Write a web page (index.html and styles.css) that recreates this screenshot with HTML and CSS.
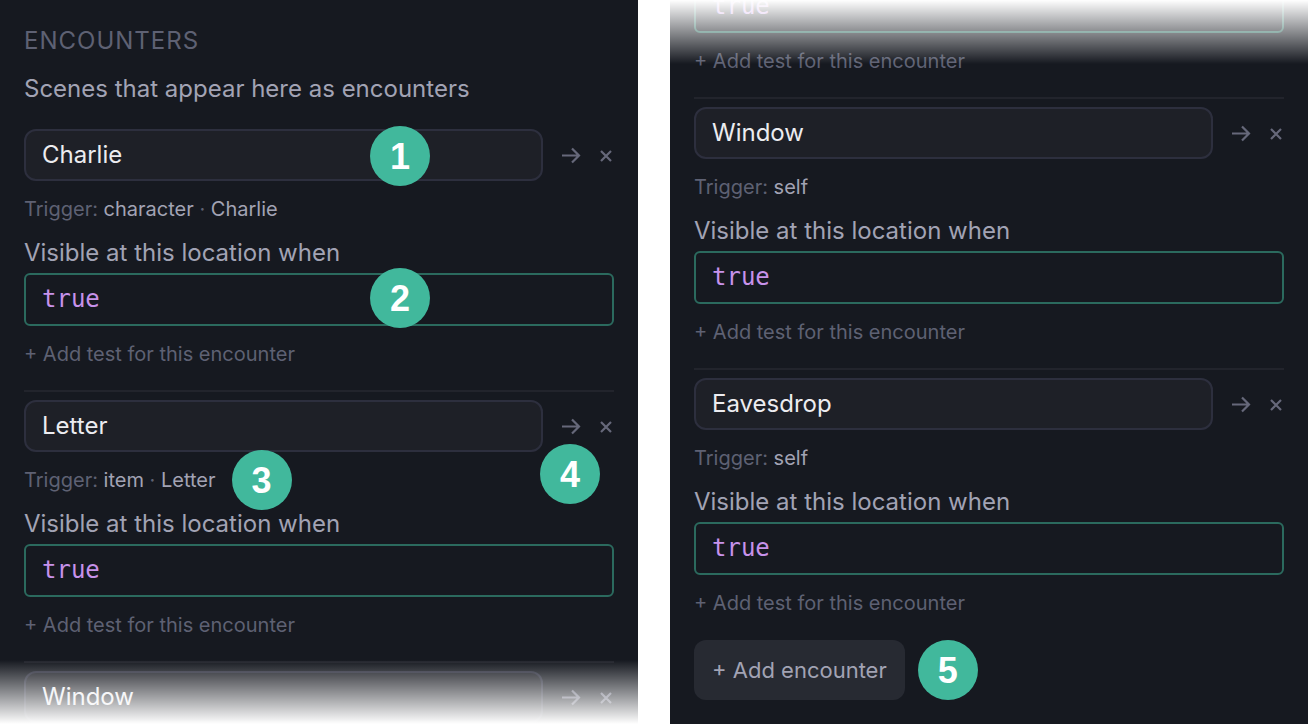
FILE: index.html
```html
<!DOCTYPE html>
<html lang="en">
<head>
<meta charset="utf-8">
<title>Encounters</title>
<link rel="stylesheet" href="styles.css">
</head>
<body>
<svg class="sprite" aria-hidden="true">
  <symbol id="arrow" viewBox="0 0 20 18"><path d="M1 9.500H18M11 2.500L18 9.500L11 16.500"/></symbol>
  <symbol id="close" viewBox="0 0 15 18"><path d="M2 5L12 15M12 5L2 15"/></symbol>
</svg>
<main class="board">
  <section class="panel panel-start">
    <h2 class="title">Encounters</h2>
    <p class="subtitle">Scenes that appear here as encounters</p>
    <article class="encounter">
      <div class="head">
        <input class="name" type="text" value="Charlie" aria-label="Scene">
        <button class="icon" type="button" aria-label="Open scene"><svg width="20" height="18"><use href="#arrow"/></svg></button>
        <button class="icon" type="button" aria-label="Remove"><svg width="15" height="18"><use href="#close"/></svg></button>
        <span class="badge badge-name">1</span>
      </div>
      <p class="trigger">Trigger: <b>character</b> · <b>Charlie</b></p>
      <label class="label" for="when-1">Visible at this location when</label>
      <div class="field">
        <input class="code" id="when-1" type="text" value="true">
        <span class="badge badge-code">2</span>
      </div>
      <button class="add-test" type="button">+ Add test for this encounter</button>
    </article>
    <article class="encounter">
      <div class="head">
        <input class="name" type="text" value="Letter" aria-label="Scene">
        <button class="icon" type="button" aria-label="Open scene"><svg width="20" height="18"><use href="#arrow"/></svg></button>
        <button class="icon" type="button" aria-label="Remove"><svg width="15" height="18"><use href="#close"/></svg></button>
        <span class="badge badge-actions">4</span>
      </div>
      <p class="trigger">Trigger: <b>item</b> · <b>Letter</b><span class="badge badge-trigger">3</span></p>
      <label class="label" for="when-2">Visible at this location when</label>
      <div class="field"><input class="code" id="when-2" type="text" value="true"></div>
      <button class="add-test" type="button">+ Add test for this encounter</button>
    </article>
    <article class="encounter">
      <div class="head">
        <input class="name" type="text" value="Window" aria-label="Scene">
        <button class="icon" type="button" aria-label="Open scene"><svg width="20" height="18"><use href="#arrow"/></svg></button>
        <button class="icon" type="button" aria-label="Remove"><svg width="15" height="18"><use href="#close"/></svg></button>
      </div>
    </article>
  </section>
  <section class="panel panel-end">
    <article class="encounter">
      <div class="field"><input class="code" type="text" value="true" aria-label="Visible at this location when"></div>
      <button class="add-test" type="button">+ Add test for this encounter</button>
    </article>
    <article class="encounter">
      <div class="head">
        <input class="name" type="text" value="Window" aria-label="Scene">
        <button class="icon" type="button" aria-label="Open scene"><svg width="20" height="18"><use href="#arrow"/></svg></button>
        <button class="icon" type="button" aria-label="Remove"><svg width="15" height="18"><use href="#close"/></svg></button>
      </div>
      <p class="trigger">Trigger: <b>self</b></p>
      <label class="label" for="when-3">Visible at this location when</label>
      <div class="field"><input class="code" id="when-3" type="text" value="true"></div>
      <button class="add-test" type="button">+ Add test for this encounter</button>
    </article>
    <article class="encounter">
      <div class="head">
        <input class="name" type="text" value="Eavesdrop" aria-label="Scene">
        <button class="icon" type="button" aria-label="Open scene"><svg width="20" height="18"><use href="#arrow"/></svg></button>
        <button class="icon" type="button" aria-label="Remove"><svg width="15" height="18"><use href="#close"/></svg></button>
      </div>
      <p class="trigger">Trigger: <b>self</b></p>
      <label class="label" for="when-4">Visible at this location when</label>
      <div class="field"><input class="code" id="when-4" type="text" value="true"></div>
      <button class="add-test" type="button">+ Add test for this encounter</button>
    </article>
    <div class="footer">
      <button class="add-encounter" type="button">+ Add encounter</button>
      <span class="badge badge-inline">5</span>
    </div>
  </section>
</main>
</body>
</html>
```
FILE: styles.css
```css
* { box-sizing: border-box; }
body {
  margin: 0;
  background: #fff;
  font-family: Inter, "Liberation Sans", sans-serif;
  font-size: 24px;
  line-height: 28px;
}
.sprite { position: absolute; width: 0; height: 0; }
.board {
  display: grid;
  grid-template-columns: 1fr 1fr;
  grid-template-rows: minmax(0, 1fr);
  gap: 32px;
  height: 100vh;
  padding-bottom: 1px;
}
.panel {
  position: relative;
  display: flex;
  flex-direction: column;
  min-width: 0;
  padding: 27px 24px 24px;
  overflow: hidden;
  background: #161920;
  color: #a2a3b4;
}
.panel-end { justify-content: flex-end; }
.panel::after {
  content: "";
  position: absolute;
  left: 0;
  right: 0;
  height: 64px;
  pointer-events: none;
}
.panel-start::after { bottom: 0; background: linear-gradient(to top, #fff, rgba(255, 255, 255, 0)); }
.panel-end::after { top: 0; background: linear-gradient(to bottom, #fff, rgba(255, 255, 255, 0)); }
.title {
  margin: 0 0 20px;
  font-size: 24px;
  font-weight: 400;
  letter-spacing: 1px;
  text-transform: uppercase;
  color: #5e6173;
}
.subtitle { margin: 0 0 26px; }
.encounter { display: flex; flex-direction: column; flex: none; }
.encounter + .encounter {
  margin-top: 24px;
  padding-top: 8px;
  border-top: 2px solid #22242c;
}
.head { position: relative; display: flex; align-items: center; gap: 18px; }
.name {
  flex: 1;
  min-width: 0;
  height: 52px;
  padding: 0 16px 2px;
  border: 2px solid #2d2f3e;
  border-radius: 12px;
  background: #1e2027;
  color: #ececf0;
  font: inherit;
}
.icon {
  display: flex;
  padding: 0;
  border: 0;
  background: none;
  color: #66687a;
}
.icon svg { fill: none; stroke: currentColor; stroke-width: 2.2; }
.trigger {
  position: relative;
  align-self: flex-start;
  margin: 16px 0 18px;
  font-size: 20px;
  line-height: 24px;
  color: #5e6173;
}
.trigger b { font-weight: 400; color: #a2a3b4; }
.label { margin-bottom: 6px; }
.field { position: relative; display: flex; }
.code {
  width: 100%;
  height: 53px;
  padding: 0 16px 2px;
  border: 2px solid #2b6a5e;
  border-radius: 6px;
  background: #161920;
  color: #c792ea;
  font: 24px "DejaVu Sans Mono", monospace;
}
.add-test {
  align-self: flex-start;
  margin-top: 16px;
  padding: 0;
  border: 0;
  background: none;
  color: #5e6173;
  font: 20px/24px Inter, "Liberation Sans", sans-serif;
}
.footer { display: flex; align-items: center; gap: 13px; margin-top: 25px; }
.add-encounter {
  height: 60px;
  padding: 0 18px;
  border: 0;
  border-radius: 12px;
  background: #272a32;
  color: #a2a3b4;
  font: 22px Inter, "Liberation Sans", sans-serif;
}
.badge {
  position: absolute;
  width: 60px;
  height: 60px;
  border-radius: 50%;
  background: #41b89c;
  color: #fff;
  font: bold 36px/62px "Liberation Sans", sans-serif;
  text-align: center;
}
.badge-name { left: 346px; top: -3px; }
.badge-code { left: 346px; top: -5px; }
.badge-actions { right: 14px; top: 44px; z-index: 1; }
.badge-trigger { left: 100%; top: -18px; margin-left: 16px; }
.badge-inline { position: static; }
```
